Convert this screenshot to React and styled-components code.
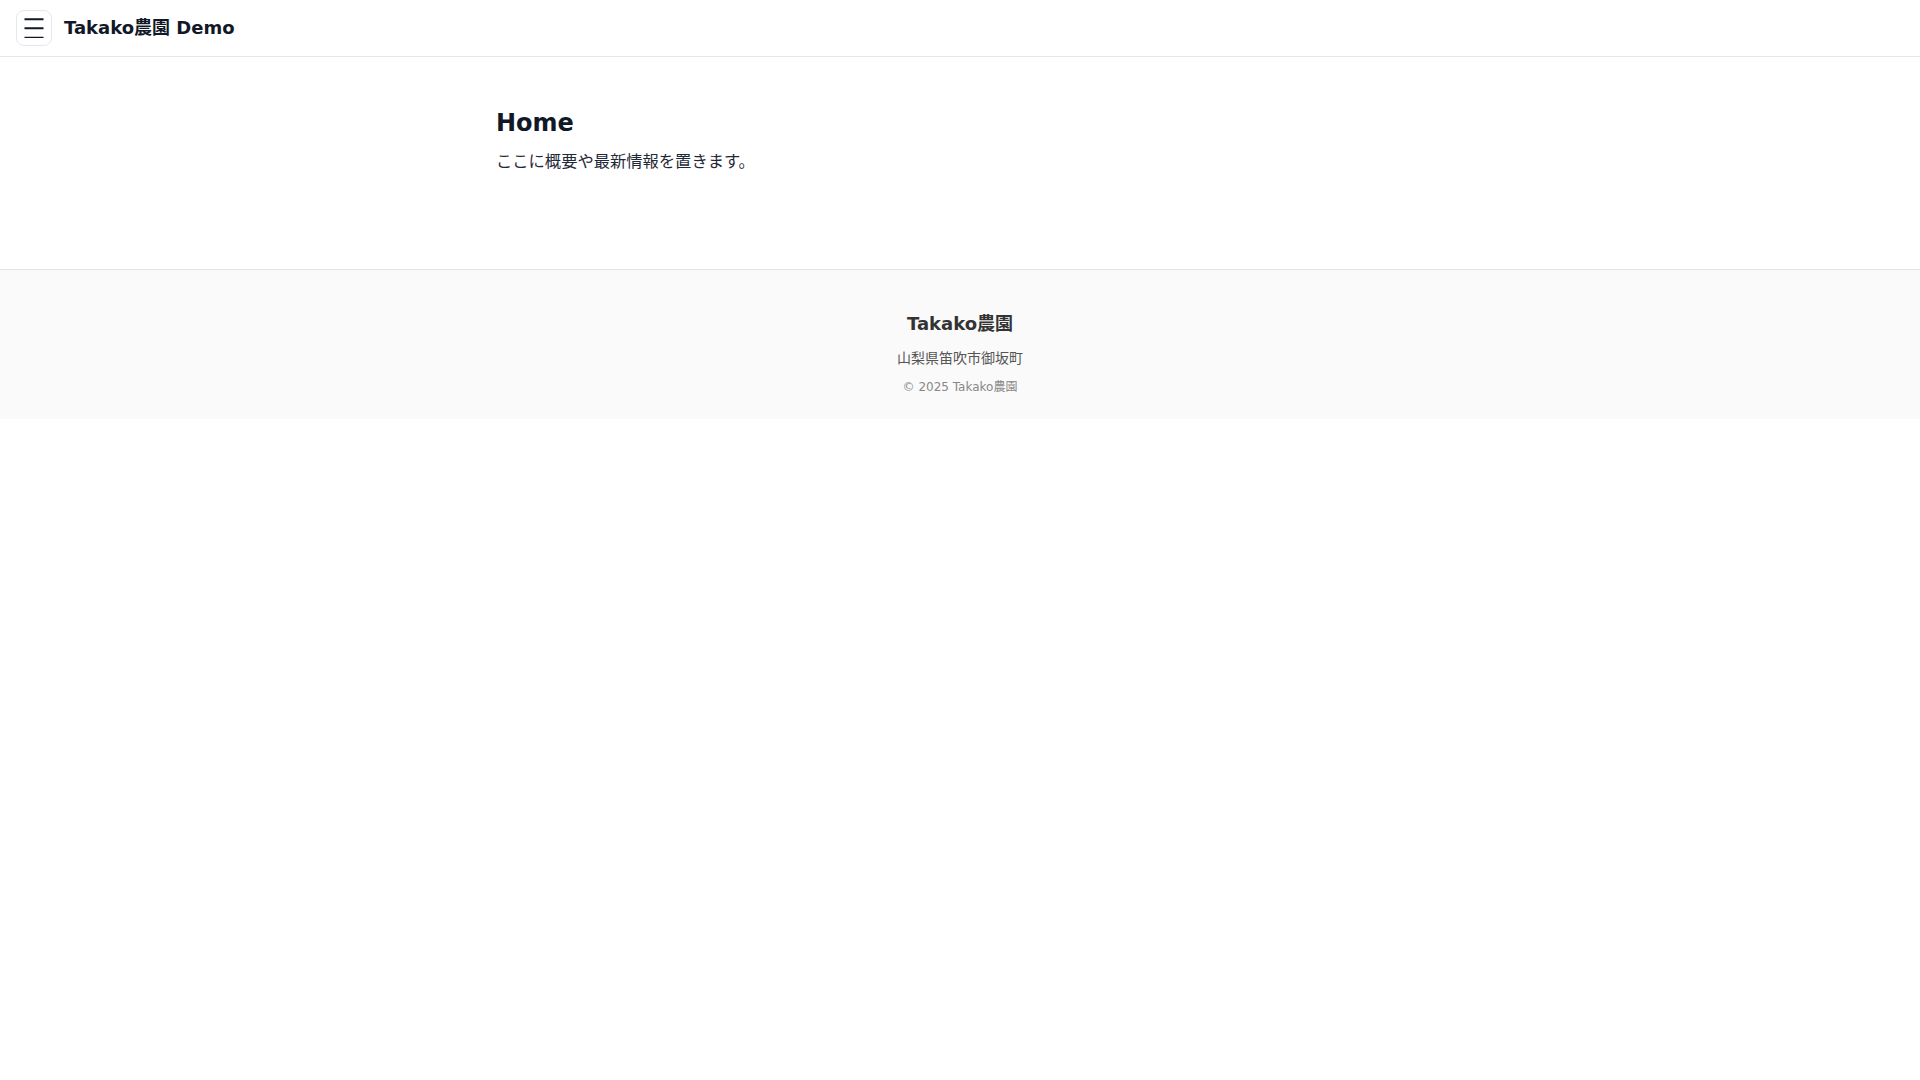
import React from "react";
import styled, { createGlobalStyle } from "styled-components";

const GlobalStyle = createGlobalStyle`
  * {
    box-sizing: border-box;
  }

  body {
    margin: 0;
    background: #ffffff;
    font-family: "DejaVu Sans", "Noto Sans CJK JP", sans-serif;
    color: #1f2937;
  }
`;

const Header = styled.header`
  display: flex;
  align-items: center;
  gap: 12px;
  height: 57px;
  padding: 0 16px 1px;
  border-bottom: 1px solid #e5e7eb;
  background: #ffffff;
`;

const MenuButton = styled.button`
  display: grid;
  place-content: center;
  width: 36px;
  height: 36px;
  padding: 0;
  background: #ffffff;
  border: 1px solid #e5e7eb;
  border-radius: 8px;
  color: #111827;
  cursor: pointer;
`;

const Brand = styled.div`
  font-size: 18px;
  font-weight: 700;
  line-height: 1;
  color: #111827;
`;

const Main = styled.main`
  max-width: 960px;
  margin: 0 auto;
  padding: 32px 16px 56px;
  min-height: 212px;
`;

const Title = styled.h2`
  margin: 20px 0 11px;
  font-size: 24px;
  font-weight: 700;
  color: #111827;
`;

const Lead = styled.p`
  margin: 0;
  font-size: 16.3px;
  color: #1f2937;
`;

const Footer = styled.footer`
  display: flex;
  flex-direction: column;
  align-items: center;
  padding: 39px 16px 25px;
  background: #fafafa;
  border-top: 1px solid #e5e5e5;
  text-align: center;
`;

const FooterName = styled.div`
  font-size: 18px;
  font-weight: 700;
  color: #333333;
`;

const FooterAddress = styled.div`
  margin-top: 12px;
  font-size: 14px;
  color: #555555;
`;

const Copyright = styled.small`
  margin-top: 10px;
  font-size: 12px;
  color: #888888;
`;

const HamburgerIcon = () => (
  <svg width="20" height="20" viewBox="0 0 20 20" aria-hidden="true">
    <path
      d="M0.5 1.3h19M0.5 10.3h19M0.5 19.7h19"
      stroke="currentColor"
      strokeWidth="2"
      fill="none"
    />
  </svg>
);

export default function App() {
  return (
    <>
      <GlobalStyle />
      <Header>
        <MenuButton type="button" aria-label="メニュー">
          <HamburgerIcon />
        </MenuButton>
        <Brand>Takako農園 Demo</Brand>
      </Header>

      <Main>
        <Title>Home</Title>
        <Lead>ここに概要や最新情報を置きます。</Lead>
      </Main>

      <Footer>
        <FooterName>Takako農園</FooterName>
        <FooterAddress>山梨県笛吹市御坂町</FooterAddress>
        <Copyright>© 2025 Takako農園</Copyright>
      </Footer>
    </>
  );
}
